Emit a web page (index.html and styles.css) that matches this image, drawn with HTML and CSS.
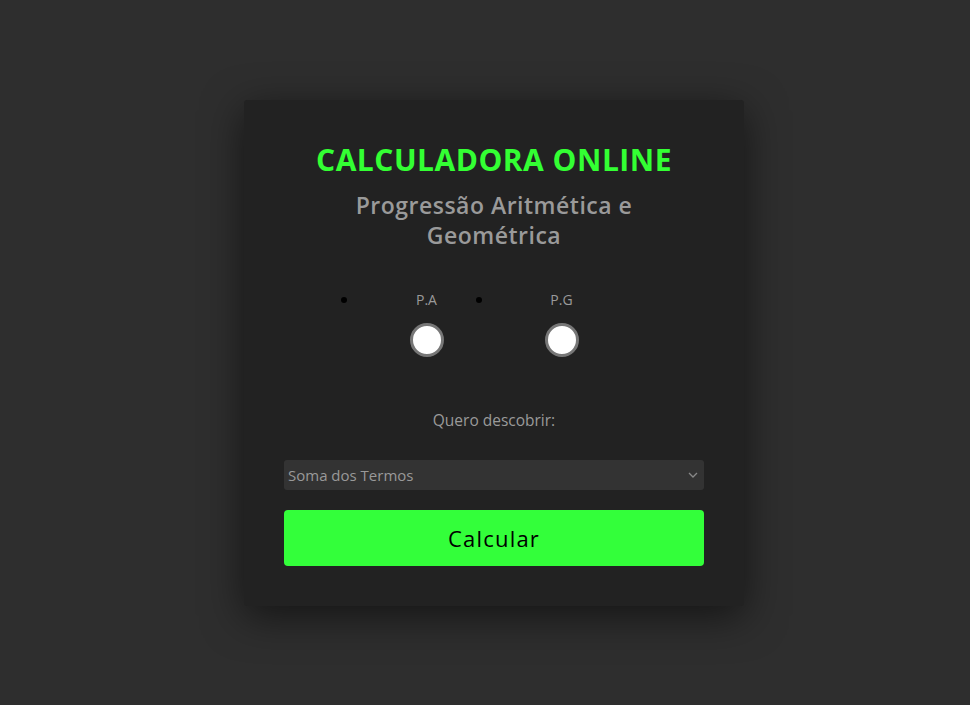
FILE: index.html
```html
<!DOCTYPE html>
<html lang="pt">
<head>
<meta charset="utf-8">
<title>Calculadora Online</title>
<link rel="stylesheet" href="styles.css">
</head>
<body>
<main class="card">
  <h1 class="title">CALCULADORA ONLINE</h1>
  <h2 class="subtitle">Progressão Aritmética e Geométrica</h2>
  <ul class="options">
    <li class="option">
      <label class="option-label" for="pa">P.A</label>
      <input class="radio" type="radio" name="tipo" id="pa">
    </li>
    <li class="option">
      <label class="option-label" for="pg">P.G</label>
      <input class="radio" type="radio" name="tipo" id="pg">
    </li>
  </ul>
  <p class="question">Quero descobrir:</p>
  <div class="select-wrap">
    <select class="select">
      <option>Soma dos Termos</option>
    </select>
    <svg class="chevron" width="10" height="6" viewBox="0 0 10 6"><path d="M1 1 L5 5 L9 1" fill="none" stroke="#888" stroke-width="1.3"/></svg>
  </div>
  <button class="btn" type="button">Calcular</button>
</main>
</body>
</html>
```

FILE: styles.css
```css
* { box-sizing: border-box; }
html, body { height: 100%; }
body {
  margin: 0;
  background: #2e2e2e;
  font-family: "Open Sans", "Noto Sans", sans-serif;
  display: flex;
  justify-content: center;
  padding-top: 100px;
  padding-left: 18px;
}
.card {
  width: 500px;
  height: 506px;
  background: #222222;
  border-radius: 3px;
  padding: 40px 40px;
  box-shadow: 0 10px 40px rgba(0,0,0,0.55);
  display: flex;
  flex-direction: column;
  align-items: stretch;
}
.title {
  margin: 0;
  text-align: center;
  color: #33ff33;
  font-size: 30px;
  font-weight: 700;
  letter-spacing: 0.5px;
  line-height: 40px;
}
.subtitle {
  margin: 10px auto 0;
  max-width: 330px;
  text-align: center;
  color: #9a9a9a;
  font-size: 23px;
  font-weight: 600;
  letter-spacing: 0.5px;
  line-height: 30px;
}
.options {
  margin: 38px 0 0;
  padding: 0;
  display: flex;
  justify-content: center;
  list-style: disc;
  color: #000;
}
.option {
  width: 135px;
  display: list-item;
}
.option-label {
  display: block;
  text-align: center;
  color: #9a9a9a;
  font-size: 14px;
  line-height: 20px;
}
.radio {
  appearance: none;
  display: block;
  margin: 13px auto 0;
  width: 34px;
  height: 34px;
  border-radius: 50%;
  background: #fff;
  border: 3px solid #777;
}
.question {
  margin: 53px 0 0;
  text-align: center;
  color: #9a9a9a;
  font-size: 15.5px;
  line-height: 20px;
}
.select-wrap {
  position: relative;
  margin-top: 30px;
}
.select {
  appearance: none;
  width: 100%;
  height: 30px;
  background: #333;
  border: none;
  border-radius: 3px;
  color: #999;
  font-family: inherit;
  font-size: 15px;
  padding: 0 4px;
}
.chevron {
  position: absolute;
  right: 6px;
  top: 12px;
}
.btn {
  margin-top: 20px;
  height: 56px;
  width: 100%;
  border: none;
  border-radius: 4px;
  background: #33ff3a;
  color: #000;
  font-family: inherit;
  font-size: 22px;
  letter-spacing: 1.2px;
}
```
